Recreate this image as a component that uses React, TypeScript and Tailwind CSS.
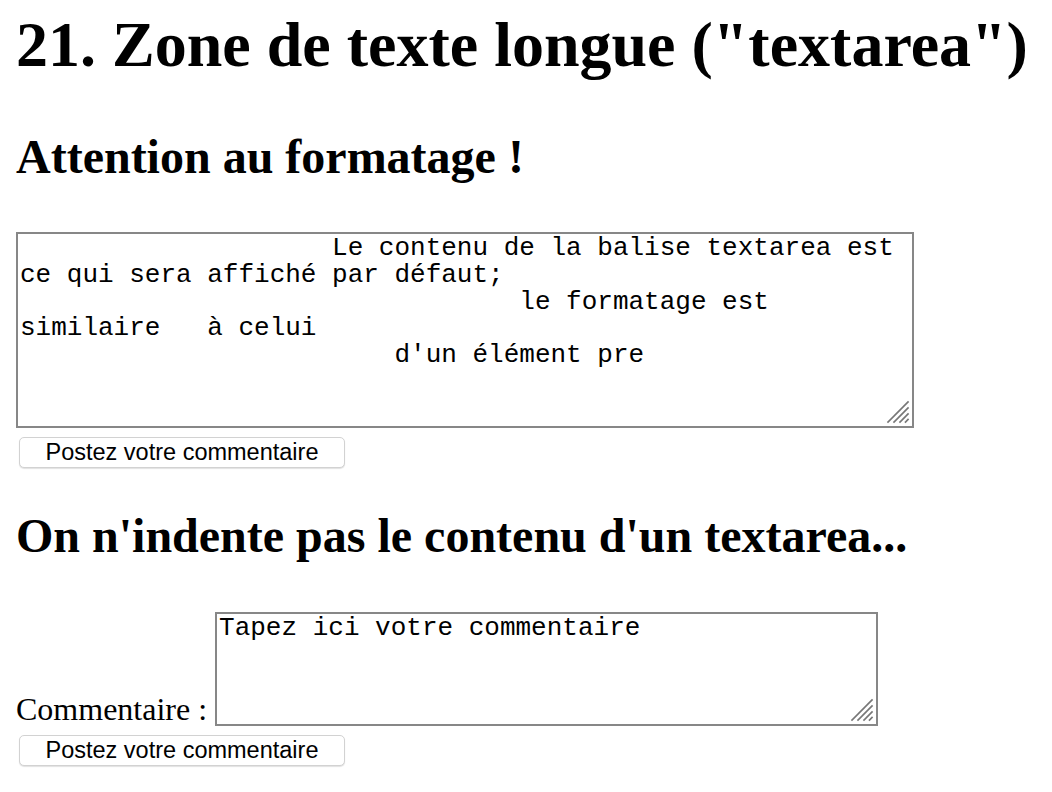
import React from 'react'

const serif = "font-['Liberation_Serif','Times_New_Roman',serif]"

const Grip = () => (
  <svg
    className="absolute bottom-[2px] right-[2px] w-[24px] h-[24px]"
    viewBox="0 0 24 24"
    fill="none"
    stroke="#777777"
    strokeWidth="1.7"
    strokeLinecap="square"
  >
    <line x1="2" y1="22" x2="22" y2="2" />
    <line x1="8" y1="22" x2="22" y2="8" />
    <line x1="14" y1="22" x2="22" y2="14" />
    <line x1="19.5" y1="22" x2="22" y2="19.5" />
  </svg>
)

const FakeTextarea = ({ lines, className }: { lines: string[]; className: string }) => (
  <div className={`relative shrink-0 border-2 border-[#878787] bg-white px-[2px] pt-[1px] overflow-hidden ${className}`}>
    <div className="font-['Liberation_Mono','Courier_New',monospace] text-[26px] leading-[26.75px] whitespace-pre text-black">
      {lines.join('\n')}
    </div>
    <Grip />
  </div>
)

const PostButton = ({ className }: { className: string }) => (
  <button
    type="button"
    className={`ml-[3px] flex items-center justify-center w-[326px] h-[31px] rounded-[5px] border border-[#d2d2d2] bg-white shadow-[0_1px_1px_rgba(0,0,0,0.12)] font-['Liberation_Sans',Arial,sans-serif] text-[23.5px] text-black ${className}`}
  >
    Postez votre commentaire
  </button>
)

export default function App() {
  const firstLines = [
    '                    Le contenu de la balise textarea est',
    'ce qui sera affiché par défaut;',
    '                                le formatage est',
    'similaire   à celui',
    "                        d'un élément pre",
  ]

  return (
    <div className={`min-h-screen bg-white px-4 pt-[8px] text-black ${serif}`}>
      <h1 className="text-[64px] font-bold leading-[74px] whitespace-nowrap">
        21. Zone de texte longue ("textarea")
      </h1>

      <h2 className="mt-[47px] text-[48px] font-bold leading-[55px]">Attention au formatage !</h2>

      <FakeTextarea lines={firstLines} className="mt-[48px] w-[898px] h-[196px]" />
      <PostButton className="mt-[9px]" />

      <h2 className="mt-[40px] text-[48px] font-bold leading-[55px]">
        On n'indente pas le contenu d'un textarea...
      </h2>

      <div className="mt-[49px] flex items-end gap-[8px]">
        <span className="text-[32px] leading-[37px] mb-[-2px]">Commentaire :</span>
        <FakeTextarea lines={['Tapez ici votre commentaire']} className="w-[663px] h-[114px]" />
      </div>
      <PostButton className="mt-[9px]" />
    </div>
  )
}
